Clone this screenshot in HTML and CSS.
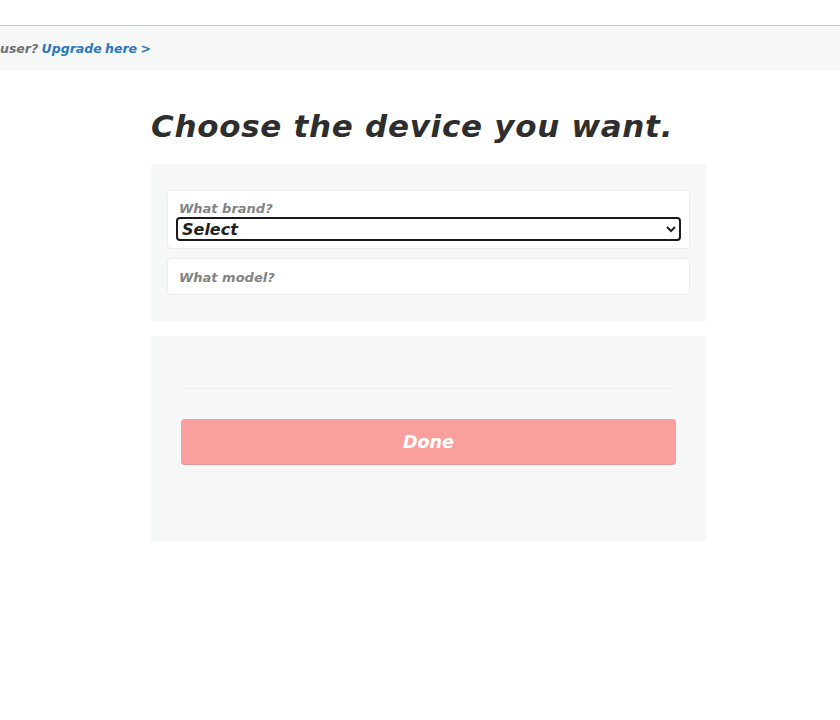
FILE: index.html
```html
<!DOCTYPE html>
<html lang="en">
<head>
  <meta charset="UTF-8">
  <title>Choose device</title>
  <link rel="stylesheet" href="styles.css">
</head>
<body>
  <div class="topbar"></div>
  <div class="upgrade">
    <span class="muted">user?</span> <a href="#">Upgrade here &gt;</a>
  </div>

  <div class="container">
    <h1>Choose the device you want.</h1>

    <div class="panel panel-fields">
      <div class="field">
        <label for="brand">What brand?</label>
        <select id="brand">
          <option>Select</option>
        </select>
      </div>
      <div class="field field-empty">
        <label>What model?</label>
      </div>
    </div>

    <div class="panel panel-actions">
      <hr>
      <button class="done">Done</button>
    </div>
  </div>
</body>
</html>
```

FILE: styles.css
```css
body {
  margin: 0;
  font-family: 'DejaVu Sans', Verdana, sans-serif;
  background: #fff;
  color: #333;
}
.topbar {
  height: 25px;
  border-bottom: 1px solid #c8c8c8;
}
.upgrade {
  background: #f6f7f7;
  height: 44px;
  line-height: 45px;
  font-size: 12.5px;
  font-weight: bold;
  font-style: italic;
  word-spacing: -1px;
}
.upgrade .muted {
  color: #6f6f6f;
}
.upgrade a {
  color: #2a78bd;
  text-decoration: none;
}
.container {
  width: 555px;
  margin-left: 151px;
}
h1 {
  margin: 36px 0 18px;
  font-size: 31px;
  line-height: 40px;
  font-weight: bold;
  font-style: italic;
  color: #2e2e2e;
  letter-spacing: 0.7px;
}
.panel {
  background: #f6f7f7;
}
.panel-fields {
  padding: 26px 16px;
  display: flex;
  flex-direction: column;
  gap: 9px;
}
.field {
  background: #fff;
  border: 1px solid #ececec;
  border-radius: 4px;
  padding: 9px 8px 7px;
  display: flex;
  flex-direction: column;
}
.field-empty {
  padding: 10px 8px 8px;
}
.field label {
  font-size: 13px;
  font-weight: bold;
  font-style: italic;
  color: #838383;
  padding-left: 3px;
  line-height: 17px;
}
.field select {
  margin-top: 0;
  height: 24px;
  border: 2px solid #1a1a1a;
  border-radius: 4px;
  background: #fff;
  font-family: inherit;
  font-size: 16px;
  font-weight: bold;
  font-style: italic;
  color: #222;
  padding: 0;
}
.panel-actions {
  margin-top: 15px;
  padding: 52px 30px 77px;
}
.panel-actions hr {
  border: none;
  border-top: 1px solid #eeeeee;
  margin: 0 0 30px;
}
.done {
  display: block;
  width: 100%;
  height: 45px;
  border: none;
  border-radius: 4px;
  background: #f9a09e;
  box-shadow: 0 1px 0 #dd9698;
  color: #fff;
  font-family: inherit;
  font-size: 17.5px;
  font-weight: bold;
  font-style: italic;
}
```
